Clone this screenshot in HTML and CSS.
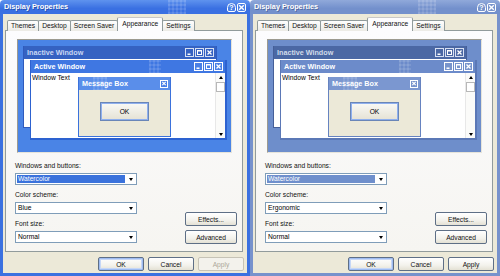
FILE: index.html
```html
<!DOCTYPE html>
<html>
<head>
<meta charset="utf-8">
<link rel="stylesheet" href="styles.css">
</head>
<body>
<div class="screen">
  <div class="dialog blue">
    <div class="titlebar">
      <span class="title">Display Properties</span>
      <span class="pat pat-title"></span>
      <div class="tb-btns">
        <span class="tbb help">?</span>
        <span class="tbb"><svg viewBox="0 0 7 7" width="7" height="7"><path d="M1.2 1.2L5.8 5.8M5.8 1.2L1.2 5.8" stroke="#fff" stroke-width="1.4"/></svg></span>
      </div>
    </div>
    <div class="client">
      <div class="tabs">
        <span class="tab">Themes</span><span class="tab">Desktop</span><span class="tab">Screen Saver</span><span class="tab active">Appearance</span><span class="tab">Settings</span>
      </div>
      <div class="panel">
        <div class="preview">
          <div class="win inactive">
            <div class="wt"><span class="wt-text">Inactive Window</span>
              <div class="mini-btns">
                <span class="mb"><svg viewBox="0 0 7 7" width="7" height="7"><rect x="1.5" y="4.5" width="3" height="1.5" fill="#fff"/></svg></span>
                <span class="mb"><svg viewBox="0 0 7 7" width="7" height="7"><rect x="1.5" y="1.5" width="4" height="4" fill="none" stroke="#fff"/><rect x="1" y="1" width="5" height="1.5" fill="#fff"/></svg></span>
                <span class="mb"><svg viewBox="0 0 7 7" width="7" height="7"><path d="M1.5 1.5L5.5 5.5M5.5 1.5L1.5 5.5" stroke="#fff" stroke-width="1.3"/></svg></span>
              </div>
            </div>
            <div class="wb"></div>
          </div>
          <div class="win activewin">
            <div class="wt"><span class="wt-text">Active Window</span>
              <span class="pat pat-active"></span>
              <div class="mini-btns">
                <span class="mb"><svg viewBox="0 0 7 7" width="7" height="7"><rect x="1.5" y="4.5" width="3" height="1.5" fill="#fff"/></svg></span>
                <span class="mb"><svg viewBox="0 0 7 7" width="7" height="7"><rect x="1.5" y="1.5" width="4" height="4" fill="none" stroke="#fff"/><rect x="1" y="1" width="5" height="1.5" fill="#fff"/></svg></span>
                <span class="mb"><svg viewBox="0 0 7 7" width="7" height="7"><path d="M1.5 1.5L5.5 5.5M5.5 1.5L1.5 5.5" stroke="#fff" stroke-width="1.3"/></svg></span>
              </div>
            </div>
            <div class="wb">
              <span class="wtext">Window Text</span>
              <div class="scrollbar">
                <span class="sb-up"></span>
                <span class="sb-thumb"></span>
                <span class="sb-down"></span>
              </div>
            </div>
          </div>
          <div class="msgbox">
            <div class="wt"><span class="wt-text">Message Box</span>
              <span class="pat pat-msg"></span>
              <span class="mb close"><svg viewBox="0 0 7 7" width="7" height="7"><path d="M1.5 1.5L5.5 5.5M5.5 1.5L1.5 5.5" stroke="#fff" stroke-width="1.3"/></svg></span>
            </div>
            <div class="msg-body"><span class="ok-btn">OK</span></div>
          </div>
        </div>
        <div class="controls">
          <div class="fields">
            <div class="label">Windows and buttons:</div>
            <div class="select"><span class="sel-text hl">Watercolor</span><span class="arrow"></span></div>
            <div class="label">Color scheme:</div>
            <div class="select"><span class="sel-text">Blue</span><span class="arrow"></span></div>
            <div class="label">Font size:</div>
            <div class="select"><span class="sel-text">Normal</span><span class="arrow"></span></div>
          </div>
          <div class="side-btns">
            <span class="btn side">Effects...</span>
            <span class="btn side">Advanced</span>
          </div>
        </div>
      </div>
      <div class="footer">
        <span class="btn foot default">OK</span>
        <span class="btn foot">Cancel</span>
        <span class="btn foot disabled">Apply</span>
      </div>
    </div>
  </div>

  <div class="dialog ergo">
    <div class="titlebar">
      <span class="title">Display Properties</span>
      <span class="pat pat-title"></span>
      <div class="tb-btns">
        <span class="tbb help">?</span>
        <span class="tbb"><svg viewBox="0 0 7 7" width="7" height="7"><path d="M1.2 1.2L5.8 5.8M5.8 1.2L1.2 5.8" stroke="#fff" stroke-width="1.4"/></svg></span>
      </div>
    </div>
    <div class="client">
      <div class="tabs">
        <span class="tab">Themes</span><span class="tab">Desktop</span><span class="tab">Screen Saver</span><span class="tab active">Appearance</span><span class="tab">Settings</span>
      </div>
      <div class="panel">
        <div class="preview">
          <div class="win inactive">
            <div class="wt"><span class="wt-text">Inactive Window</span>
              <div class="mini-btns">
                <span class="mb"><svg viewBox="0 0 7 7" width="7" height="7"><rect x="1.5" y="4.5" width="3" height="1.5" fill="#fff"/></svg></span>
                <span class="mb"><svg viewBox="0 0 7 7" width="7" height="7"><rect x="1.5" y="1.5" width="4" height="4" fill="none" stroke="#fff"/><rect x="1" y="1" width="5" height="1.5" fill="#fff"/></svg></span>
                <span class="mb"><svg viewBox="0 0 7 7" width="7" height="7"><path d="M1.5 1.5L5.5 5.5M5.5 1.5L1.5 5.5" stroke="#fff" stroke-width="1.3"/></svg></span>
              </div>
            </div>
            <div class="wb"></div>
          </div>
          <div class="win activewin">
            <div class="wt"><span class="wt-text">Active Window</span>
              <span class="pat pat-active"></span>
              <div class="mini-btns">
                <span class="mb"><svg viewBox="0 0 7 7" width="7" height="7"><rect x="1.5" y="4.5" width="3" height="1.5" fill="#fff"/></svg></span>
                <span class="mb"><svg viewBox="0 0 7 7" width="7" height="7"><rect x="1.5" y="1.5" width="4" height="4" fill="none" stroke="#fff"/><rect x="1" y="1" width="5" height="1.5" fill="#fff"/></svg></span>
                <span class="mb"><svg viewBox="0 0 7 7" width="7" height="7"><path d="M1.5 1.5L5.5 5.5M5.5 1.5L1.5 5.5" stroke="#fff" stroke-width="1.3"/></svg></span>
              </div>
            </div>
            <div class="wb">
              <span class="wtext">Window Text</span>
              <div class="scrollbar">
                <span class="sb-up"></span>
                <span class="sb-thumb"></span>
                <span class="sb-down"></span>
              </div>
            </div>
          </div>
          <div class="msgbox">
            <div class="wt"><span class="wt-text">Message Box</span>
              <span class="pat pat-msg"></span>
              <span class="mb close"><svg viewBox="0 0 7 7" width="7" height="7"><path d="M1.5 1.5L5.5 5.5M5.5 1.5L1.5 5.5" stroke="#fff" stroke-width="1.3"/></svg></span>
            </div>
            <div class="msg-body"><span class="ok-btn">OK</span></div>
          </div>
        </div>
        <div class="controls">
          <div class="fields">
            <div class="label">Windows and buttons:</div>
            <div class="select"><span class="sel-text hl">Watercolor</span><span class="arrow"></span></div>
            <div class="label">Color scheme:</div>
            <div class="select"><span class="sel-text">Ergonomic</span><span class="arrow"></span></div>
            <div class="label">Font size:</div>
            <div class="select"><span class="sel-text">Normal</span><span class="arrow"></span></div>
          </div>
          <div class="side-btns">
            <span class="btn side">Effects...</span>
            <span class="btn side">Advanced</span>
          </div>
        </div>
      </div>
      <div class="footer">
        <span class="btn foot default">OK</span>
        <span class="btn foot">Cancel</span>
        <span class="btn foot">Apply</span>
      </div>
    </div>
  </div>
</div>
</body>
</html>
```

FILE: styles.css
```css
* { box-sizing: border-box; margin: 0; padding: 0; }

body {
  margin: 0;
  width: 500px;
  height: 276px;
  overflow: hidden;
  background: #fff;
  font-family: "Liberation Sans", Arial, sans-serif;
  font-size: 6.7px;
  color: #000;
}

.screen {
  display: flex;
  width: 500px;
  height: 276px;
}

.dialog {
  width: 250px;
  height: 276px;
  display: flex;
  flex-direction: column;
}

.dialog.blue {
  --frame: #3b71e0;
  --title-top: #5f93ee;
  --title-bot: #3a70e2;
  --desk: #4a84e6;
  --inact: #3562c2;
  --inact-text: #c9d7f4;
  --inact-frame: #2f5bbd;
  --act: #3f77e2;
  --act-frame: #2d62d0;
  --msg: #5a8eea;
  --msg-frame: #3b72dc;
  --hl: #3a72dc;
  --mb: #4a80e6;
}

.dialog.ergo {
  --frame: #7792cc;
  --title-top: #90a9da;
  --title-bot: #7390cc;
  --desk: #6e8ecb;
  --inact: #4b68a4;
  --inact-text: #d2dbea;
  --inact-frame: #455f98;
  --act: #6c8bca;
  --act-frame: #5b78b6;
  --msg: #7b97d0;
  --msg-frame: #6683c0;
  --hl: #6f8fcc;
  --mb: #7894cc;
}

/* ---------- title bar ---------- */
.titlebar {
  height: 14px;
  flex: none;
  display: flex;
  align-items: center;
  position: relative;
  padding: 0 4px 0 4px;
  background: linear-gradient(180deg, var(--title-top) 0%, var(--title-bot) 60%, var(--title-bot) 100%);
  border-radius: 4px 4px 0 0;
}

.title {
  font-weight: bold;
  font-size: 7.3px;
  color: #fff;
  text-shadow: 1px 1px 0 rgba(0, 0, 40, 0.3);
  flex: 1;
  line-height: 14px;
}

.pat {
  position: absolute;
  top: 0;
  bottom: 0;
  background-image:
    linear-gradient(90deg, rgba(255,255,255,0.1) 50%, transparent 50%),
    linear-gradient(180deg, rgba(255,255,255,0.1) 50%, transparent 50%);
  background-size: 4px 4px;
  pointer-events: none;
}

.pat-title { left: 168px; width: 18px; }
.pat-active { left: 118px; width: 12px; }
.pat-msg { left: 14px; width: 14px; }

.tb-btns {
  display: flex;
  gap: 1px;
}

.tbb {
  width: 9px;
  height: 9px;
  border: 1px solid #fff;
  border-radius: 2px;
  background: var(--mb);
  color: #fff;
  font-weight: bold;
  font-size: 7px;
  line-height: 7px;
  display: flex;
  align-items: center;
  justify-content: center;
}

.tbb.help { border-radius: 50% 50% 2px 2px; }

/* ---------- client ---------- */
.client {
  flex: 1;
  background: #ece9d8;
  border: 3px solid var(--frame);
  border-top: none;
  display: flex;
  flex-direction: column;
  padding: 3px 1px 0 2px;
}

.tabs {
  height: 14px;
  display: flex;
  align-items: flex-end;
  padding-left: 2px;
  margin-bottom: -1px;
  position: relative;
  z-index: 2;
}

.tab {
  height: 11px;
  line-height: 10px;
  padding: 0 3px;
  border: 1px solid #919b9c;
  border-bottom: none;
  border-radius: 2px 2px 0 0;
  background: linear-gradient(180deg, #fefefe, #ecebe6);
  margin-right: -1px;
  white-space: nowrap;
  color: #111;
}

.tab.active {
  height: 14px;
  line-height: 12px;
  padding: 0 4px;
  margin: 0 -1px 0 0;
  background: #fcfcfe;
  border-top: 1px solid #c8c8c8;
  position: relative;
  z-index: 3;
}

.panel {
  height: 222px;
  flex: none;
  width: 238px;
  border: 1px solid #919b9c;
  background: linear-gradient(180deg, #fcfcfe 0%, #f6f5f1 100%);
  display: flex;
  flex-direction: column;
}

/* ---------- preview ---------- */
.preview {
  position: relative;
  margin: 8px 0 0 11px;
  width: 215px;
  height: 114px;
  background: var(--desk);
  border: 1px solid;
  border-color: #9c9a90 #e6e4da #e6e4da #9c9a90;
  flex: none;
}

.win, .msgbox {
  position: absolute;
  display: flex;
  flex-direction: column;
}

.win.inactive {
  left: 5px;
  top: 6px;
  width: 194px;
  height: 82px;
  background: var(--inact-frame);
  padding: 0 1px 1px;
}

.win.activewin {
  left: 12px;
  top: 20px;
  width: 197px;
  height: 80px;
  background: var(--act-frame);
  padding: 0 2px 2px 1px;
}

.wt {
  height: 13px;
  flex: none;
  display: flex;
  align-items: center;
  position: relative;
  padding: 0 2px 0 3px;
  font-weight: bold;
  font-size: 7.2px;
}

.inactive .wt { background: var(--inact); color: var(--inact-text); }
.activewin .wt { background: var(--act); color: #fff; }
.msgbox .wt { background: var(--msg); color: #fff; }

.wt-text { flex: 1; white-space: nowrap; }

.mini-btns { display: flex; gap: 1px; }

.mb {
  width: 9px;
  height: 9px;
  border: 1px solid #fff;
  background: var(--mb);
  display: flex;
  align-items: center;
  justify-content: center;
}

.inactive .mb { border-color: #d7e0f2; background: var(--inact); }

.wb {
  flex: 1;
  background: #fff;
  display: flex;
  position: relative;
}

.wtext {
  flex: 1;
  padding: 1px 0 0 1px;
  line-height: 8px;
}

.scrollbar {
  width: 10px;
  display: flex;
  flex-direction: column;
  align-items: center;
  background: #fbfbf9;
  border-left: 1px solid #e8e8e8;
  padding: 3px 0 2px;
}

.sb-up, .sb-down {
  width: 0;
  height: 0;
  border-left: 2.5px solid transparent;
  border-right: 2.5px solid transparent;
}

.sb-up { border-bottom: 3px solid #000; }
.sb-down { border-top: 3px solid #000; margin-top: auto; }

.sb-thumb {
  width: 9px;
  height: 10px;
  margin-top: 3px;
  background: #fff;
  border: 1px solid #b8b8b8;
}

.msgbox {
  left: 60px;
  top: 37px;
  width: 93px;
  height: 60px;
  background: var(--msg-frame);
  padding: 0 1px 1px;
}

.msgbox .mb.close { width: 8px; height: 8px; }

.msg-body {
  flex: 1;
  background: #ece9d8;
  display: flex;
  justify-content: center;
  padding-top: 12px;
}

.ok-btn {
  width: 49px;
  height: 19px;
  border: 2px solid #8fb0ee;
  outline: 1px solid #6a86b8;
  outline-offset: -1px;
  background: linear-gradient(180deg, #f8f8f4, #e6e3d6);
  display: flex;
  align-items: center;
  justify-content: center;
  font-size: 6.7px;
}

/* ---------- controls ---------- */
.controls {
  display: flex;
  justify-content: space-between;
  padding: 0 5px 0 9px;
}

.fields {
  display: flex;
  flex-direction: column;
  padding-top: 8px;
  width: 122px;
}

.label {
  line-height: 10px;
  margin-top: 5px;
  color: #111;
}

.label:first-child { margin-top: 0; }

.select {
  margin-top: 2px;
  height: 12px;
  border: 1px solid #7f9db9;
  background: #fff;
  display: flex;
  align-items: stretch;
}

.sel-text {
  flex: 1;
  line-height: 10px;
  padding-left: 2px;
}

.sel-text.hl {
  background: var(--hl);
  color: #fff;
  margin: 1px 0 1px 1px;
  line-height: 8px;
  padding-left: 1px;
}

.arrow {
  width: 11px;
  display: flex;
  align-items: center;
  justify-content: center;
}

.arrow::before {
  content: "";
  border-left: 2.5px solid transparent;
  border-right: 2.5px solid transparent;
  border-top: 3px solid #000;
}

.side-btns {
  align-self: flex-end;
  display: flex;
  flex-direction: column;
  gap: 4px;
  margin-bottom: -1px;
}

.btn {
  height: 14px;
  display: flex;
  align-items: center;
  justify-content: center;
  border: 1px solid #5e6f86;
  border-radius: 2px;
  background: linear-gradient(180deg, #ffffff 0%, #f3f2ec 60%, #e4e1d4 100%);
  color: #111;
  white-space: nowrap;
}

.btn.side { width: 52px; }

.footer {
  display: flex;
  justify-content: flex-end;
  gap: 4px;
  margin-top: 5px;
  padding-right: 2px;
}

.btn.foot { width: 46px; }

.btn.default {
  box-shadow: inset 0 0 0 1px #9ebcf2, inset 0 0 0 2px #c6d7f6;
}

.btn.disabled {
  color: #aca899;
  border-color: #c6c3b6;
  background: #f3f2ec;
}
```
